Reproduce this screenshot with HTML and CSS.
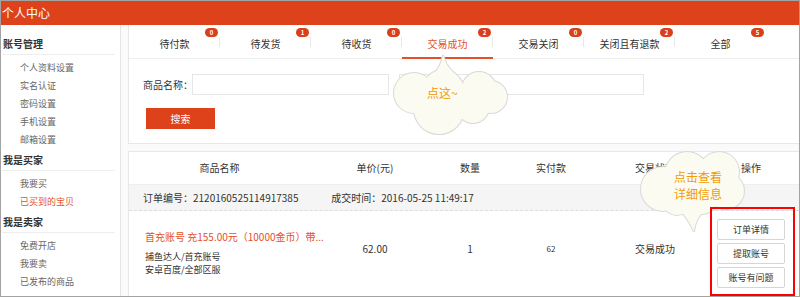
FILE: index.html
```html
<!DOCTYPE html>
<html lang="zh-CN">
<head>
    <meta charset="UTF-8">
    <meta name="viewport" content="width=device-width, initial-scale=1.0">
    <title>个人中心</title>
    <link rel="stylesheet" href="styles.css">
</head>
<body>

<div class="page">
    <div class="topbar">个人中心</div>

    <div class="layout">
        <aside class="side">
            <div class="side-title first">账号管理</div>
            <ul class="side-list">
                <li>个人资料设置</li>
                <li>实名认证</li>
                <li>密码设置</li>
                <li>手机设置</li>
                <li>邮箱设置</li>
            </ul>
            <div class="side-title">我是买家</div>
            <ul class="side-list">
                <li>我要买</li>
                <li class="on">已买到的宝贝</li>
            </ul>
            <div class="side-title">我是卖家</div>
            <ul class="side-list">
                <li>免费开店</li>
                <li>我要卖</li>
                <li>已发布的商品</li>
            </ul>
        </aside>

        <main class="main">
            <section class="panel panel-search">
                <div class="tabs">
                    <div class="tab">待付款<span class="badge">0</span></div>
                    <div class="tab">待发货<span class="badge">1</span></div>
                    <div class="tab">待收货<span class="badge">0</span></div>
                    <div class="tab active">交易成功<span class="badge">2</span></div>
                    <div class="tab">交易关闭<span class="badge">0</span></div>
                    <div class="tab">关闭且有退款<span class="badge">2</span></div>
                    <div class="tab last">全部<span class="badge">5</span></div>
                </div>
                <div class="search">
                    <div class="search-row">
                        <label class="search-label">商品名称：</label>
                        <input class="field field-name" type="text">
                        <input class="field field-extra" type="text">
                    </div>
                    <button class="btn-search">搜索</button>
                </div>
            </section>

            <section class="panel panel-orders">
                <div class="thead cols">
                    <div>商品名称</div>
                    <div>单价(元)</div>
                    <div>数量</div>
                    <div>实付款</div>
                    <div>交易状态</div>
                    <div>操作</div>
                </div>
                <div class="order-info">
                    <span class="order-no">订单编号：2120160525114917385</span>
                    <span>成交时间：2016-05-25 11:49:17</span>
                </div>
                <div class="order-item cols">
                    <div class="goods">
                        <div class="goods-title">首充账号 充155.00元（10000金币）带...</div>
                        <div class="goods-sub">捕鱼达人/首充账号</div>
                        <div class="goods-sub">安卓百度/全部区服</div>
                    </div>
                    <div class="num">62.00</div>
                    <div class="num">1</div>
                    <div class="num small">62</div>
                    <div class="num">交易成功</div>
                    <div class="ops">
                        <button class="op-btn">订单详情</button>
                        <button class="op-btn">提取账号</button>
                        <button class="op-btn">账号有问题</button>
                    </div>
                </div>
            </section>
        </main>
    </div>

    <!-- callout clouds drawn over the page -->
    <svg class="overlay" width="800" height="297" viewBox="0 0 800 297">
        <g class="cloud-edge">
            <circle cx="413" cy="92" r="20"/>
            <circle cx="442" cy="90" r="21"/>
            <circle cx="478" cy="88" r="17"/>
            <circle cx="490" cy="96" r="16"/>
            <circle cx="438" cy="108" r="25"/>
            <circle cx="472" cy="106" r="16"/>
            <path d="M432 74 Q440 66 442 54 Q445 65 453 72 Z"/>

            <circle cx="662" cy="188" r="22"/>
            <circle cx="686" cy="173" r="22"/>
            <circle cx="718" cy="171" r="20"/>
            <circle cx="725" cy="190" r="18"/>
            <circle cx="700" cy="195" r="18"/>
            <circle cx="676" cy="200" r="14"/>
            <path d="M676 206 Q688 218 693 231 Q694 218 703 210 Z"/>
        </g>
        <g class="cloud-fill">
            <circle cx="413" cy="92" r="20"/>
            <circle cx="442" cy="90" r="21"/>
            <circle cx="478" cy="88" r="17"/>
            <circle cx="490" cy="96" r="16"/>
            <circle cx="438" cy="108" r="25"/>
            <circle cx="472" cy="106" r="16"/>
            <path d="M432 74 Q440 66 442 54 Q445 65 453 72 Z"/>

            <circle cx="662" cy="188" r="22"/>
            <circle cx="686" cy="173" r="22"/>
            <circle cx="718" cy="171" r="20"/>
            <circle cx="725" cy="190" r="18"/>
            <circle cx="700" cy="195" r="18"/>
            <circle cx="676" cy="200" r="14"/>
            <path d="M676 206 Q688 218 693 231 Q694 218 703 210 Z"/>
        </g>
        <text class="cloud-text" x="426" y="97">点这~</text>
        <text class="cloud-text" x="673" y="181">点击查看</text>
        <text class="cloud-text" x="673" y="198">详细信息</text>
    </svg>

    <div class="highlight"></div>
</div>

</body>
</html>
```

FILE: styles.css
```css
body {
    margin: 0;
    font-family: "Noto Sans CJK SC", "Noto Sans", sans-serif;
    color: #333;
    background: #fff;
}
.page {
    position: relative;
    width: 800px;
    height: 297px;
    border: 1px solid #a3a3a3;
    box-sizing: border-box;
    overflow: hidden;
}
.topbar {
    height: 24px;
    line-height: 24px;
    padding-left: 1px;
    background: #dd421a;
    color: #fff;
    font-size: 12px;
}
.layout {
    display: flex;
    height: 271px;
}

/* sidebar */
.side {
    width: 119px;
    flex: none;
    border-right: 1px solid #e6e6e6;
    background: #fff;
}
.side-title {
    margin: 0 5px 0 1px;
    padding-left: 1px;
    line-height: 20px;
    font-size: 10px;
    font-weight: bold;
    border-bottom: 1px solid #eee;
}
.side-title.first {
    margin-top: 9px;
}
.side-list {
    list-style: none;
    margin: 0;
    padding: 4px 0 1px 19px;
}
.side-list li {
    line-height: 18px;
    font-size: 9px;
    color: #666;
}
.side-list li.on {
    color: #e4502a;
}

/* main area */
.main {
    flex: 1;
    padding-left: 7px;
    background: #fafafa;
}
.panel {
    background: #fff;
    border-left: 1px solid #e8e8e8;
    border-bottom: 1px solid #e8e8e8;
}
.tabs {
    display: flex;
    height: 34px;
    box-sizing: border-box;
    border-bottom: 1px solid #eee;
}
.tab {
    position: relative;
    width: 91px;
    height: 33px;
    box-sizing: border-box;
    padding-top: 12px;
    line-height: 13px;
    text-align: center;
    font-size: 10px;
}
.tab::after {
    content: "";
    position: absolute;
    right: 0;
    top: 12px;
    width: 1px;
    height: 10px;
    background: #e8e8e8;
}
.tab.last::after {
    display: none;
}
.tab.active {
    color: #e4502a;
    height: 34px;
    margin-bottom: -1px;
    border-bottom: 2px solid #e4502a;
}
.badge {
    position: absolute;
    top: 3px;
    right: 2px;
    width: 13px;
    height: 9px;
    line-height: 9px;
    border-radius: 5px;
    background: #d9401a;
    color: #fff;
    font-size: 6px;
    font-weight: bold;
    text-align: center;
}

.search {
    padding: 15px 0 14px 14px;
}
.search-row {
    display: flex;
    align-items: center;
    height: 21px;
}
.search-label {
    flex: none;
    width: 49px;
    font-size: 10px;
    white-space: nowrap;
}
.field {
    flex: none;
    height: 21px;
    box-sizing: border-box;
    border: 1px solid #e6e6e6;
    margin: 0;
    padding: 0 4px;
}
.field-name {
    width: 197px;
}
.field-extra {
    width: 245px;
    margin-left: 10px;
}
.btn-search {
    display: block;
    margin: 13px 0 0 3px;
    width: 69px;
    height: 21px;
    border: none;
    background: #dd421a;
    color: #fff;
    font-family: inherit;
    font-size: 10px;
    padding: 0;
}

/* order table */
.panel-orders {
    margin-top: 7px;
    border-top: 1px solid #e8e8e8;
    height: 145px;
}
.cols {
    display: grid;
    grid-template-columns: 181px 130px 60px 102px 106px 86px;
}
.thead {
    height: 32px;
    line-height: 32px;
    text-align: center;
    font-size: 10px;
    border-bottom: 1px solid #eee;
}
.order-info {
    height: 25px;
    line-height: 25px;
    padding-left: 14px;
    background: #f5f5f5;
    border-bottom: 1px dashed #ddd;
    font-size: 10px;
}
.order-no {
    display: inline-block;
    width: 186px;
}
.goods {
    padding: 18px 0 0 16px;
}
.goods-title {
    line-height: 16px;
    margin-bottom: 5px;
    font-size: 10px;
    color: #e4502a;
    white-space: nowrap;
}
.goods-sub {
    line-height: 13px;
    font-size: 9px;
}
.num {
    padding-top: 30px;
    line-height: 16px;
    text-align: center;
    font-size: 10px;
}
.num.small {
    font-size: 8px;
}
.ops {
    display: flex;
    flex-direction: column;
    align-items: center;
    gap: 3px;
    padding-top: 8px;
}
.op-btn {
    width: 68px;
    height: 21px;
    padding: 0;
    border: 1px solid #d6d6d6;
    border-radius: 2px;
    background: #fff;
    color: #333;
    font-family: inherit;
    font-size: 9px;
}

/* overlays */
.overlay {
    position: absolute;
    left: 0;
    top: 0;
    pointer-events: none;
}
.cloud-edge circle,
.cloud-edge path {
    fill: none;
    stroke: #d9d9d9;
    stroke-width: 2;
}
.cloud-fill circle,
.cloud-fill path {
    fill: #fbfbf2;
}
.cloud-text {
    font-family: "Noto Sans CJK SC", sans-serif;
    font-size: 12px;
    fill: #f49a00;
}
.highlight {
    position: absolute;
    left: 709px;
    top: 206px;
    width: 85px;
    height: 89px;
    border: 2px solid #f00;
    box-sizing: border-box;
}
```
